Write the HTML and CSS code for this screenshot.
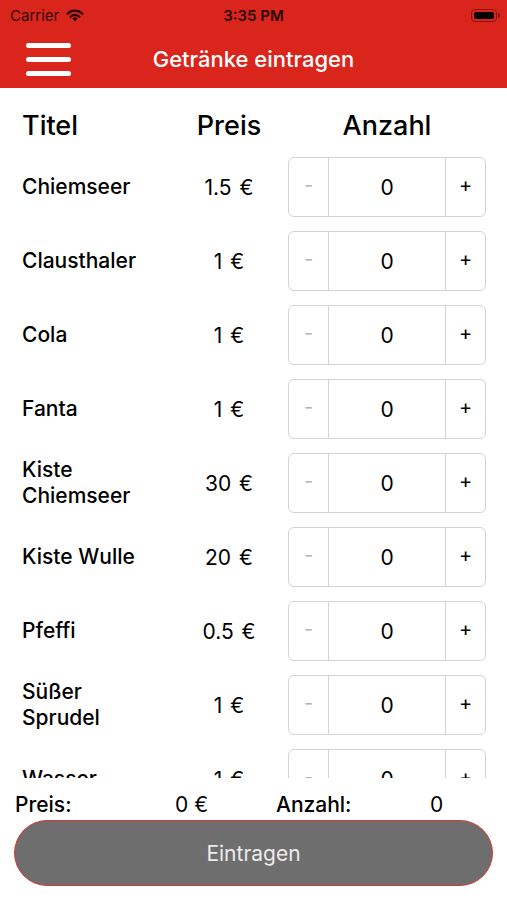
FILE: index.html
```html
<!DOCTYPE html>
<html lang="de">
  <head>
    <meta charset="UTF-8" />
    <meta name="viewport" content="width=device-width, initial-scale=1.0" />
    <title>Getränke eintragen</title>
    <link rel="stylesheet" href="styles.css">
  </head>
  <body>
    <div id="wrap">
      <div class="status-bar">
        <div class="status-left">
          <span>Carrier</span>
          <svg class="wifi" width="20" height="14" viewBox="0 0 20 14">
            <path d="M10 13.2 L7.4 10.6 A3.7 3.7 0 0 1 12.6 10.6 Z" fill="#2a0806" />
            <path d="M5.6 8.8 A6.2 6.2 0 0 1 14.4 8.8" fill="none" stroke="#2a0806" stroke-width="2.2" stroke-linecap="round" />
            <path d="M2.6 5.8 A10.4 10.4 0 0 1 17.4 5.8" fill="none" stroke="#2a0806" stroke-width="2.2" stroke-linecap="round" />
          </svg>
        </div>
        <div class="status-time">3:35 PM</div>
        <div class="status-right">
          <div class="battery"><span></span></div>
        </div>
      </div>
      <div class="nav-bar">
        <button class="menu-btn" aria-label="Menü">
          <i></i><i></i><i></i>
        </button>
        <h1 class="nav-title">Getränke eintragen</h1>
      </div>

      <div class="drink-list">
        <div class="row head">
          <div>Titel</div>
          <div class="price">Preis</div>
          <div class="count-head">Anzahl</div>
        </div>
        <div class="row">
          <div class="name">Chiemseer</div>
          <div class="price">1.5 €</div>
          <div class="stepper"><button class="minus">-</button><span>0</span><button class="plus">+</button></div>
        </div>
        <div class="row">
          <div class="name">Clausthaler</div>
          <div class="price">1 €</div>
          <div class="stepper"><button class="minus">-</button><span>0</span><button class="plus">+</button></div>
        </div>
        <div class="row">
          <div class="name">Cola</div>
          <div class="price">1 €</div>
          <div class="stepper"><button class="minus">-</button><span>0</span><button class="plus">+</button></div>
        </div>
        <div class="row">
          <div class="name">Fanta</div>
          <div class="price">1 €</div>
          <div class="stepper"><button class="minus">-</button><span>0</span><button class="plus">+</button></div>
        </div>
        <div class="row">
          <div class="name">Kiste Chiemseer</div>
          <div class="price">30 €</div>
          <div class="stepper"><button class="minus">-</button><span>0</span><button class="plus">+</button></div>
        </div>
        <div class="row">
          <div class="name">Kiste Wulle</div>
          <div class="price">20 €</div>
          <div class="stepper"><button class="minus">-</button><span>0</span><button class="plus">+</button></div>
        </div>
        <div class="row">
          <div class="name">Pfeffi</div>
          <div class="price">0.5 €</div>
          <div class="stepper"><button class="minus">-</button><span>0</span><button class="plus">+</button></div>
        </div>
        <div class="row">
          <div class="name">Süßer Sprudel</div>
          <div class="price">1 €</div>
          <div class="stepper"><button class="minus">-</button><span>0</span><button class="plus">+</button></div>
        </div>
        <div class="row">
          <div class="name">Wasser</div>
          <div class="price">1 €</div>
          <div class="stepper"><button class="minus">-</button><span>0</span><button class="plus">+</button></div>
        </div>
      </div>

      <div class="totals">
        <div class="label">Preis:</div>
        <div class="value sum">0 €</div>
        <div class="label">Anzahl:</div>
        <div class="value cnt">0</div>
      </div>
      <button class="submit-btn">Eintragen</button>
    </div>
  </body>
</html>
```

FILE: styles.css
```css
* {
  margin: 0;
  padding: 0;
  list-style: none;
  box-sizing: border-box;
  text-decoration: none;
}
body {
  font-family: Inter, "Liberation Sans", sans-serif;
  color: #000;
  background: #fff;
}
#wrap {
  width: 507px;
  height: 900px;
  overflow: hidden;
}

/* status bar */
.status-bar {
  display: flex;
  align-items: center;
  height: 30px;
  padding: 0 10px;
  background: #da251d;
  color: #2a0806;
  font-size: 15px;
}
.status-left {
  display: flex;
  align-items: center;
  gap: 6px;
  width: 120px;
}
.status-time {
  flex: 1;
  text-align: center;
  font-weight: 600;
}
.status-right {
  display: flex;
  justify-content: flex-end;
  width: 120px;
}
.battery {
  position: relative;
  width: 26px;
  height: 13px;
  padding: 2px;
  border: 1px solid rgba(42, 8, 6, 0.5);
  border-radius: 4px;
}
.battery span {
  display: block;
  height: 100%;
  background: #000;
  border-radius: 2px;
}
.battery::after {
  content: "";
  position: absolute;
  right: -4px;
  top: 3px;
  width: 2px;
  height: 5px;
  background: rgba(42, 8, 6, 0.5);
  border-radius: 0 2px 2px 0;
}

/* nav bar */
.nav-bar {
  display: flex;
  align-items: center;
  height: 58px;
  padding: 0 26px;
  background: #da251d;
}
.menu-btn {
  display: flex;
  flex-direction: column;
  gap: 9px;
  width: 45px;
  background: transparent;
  border: 0 none;
}
.menu-btn i {
  display: block;
  height: 5px;
  background: #fff;
  border-radius: 3px;
}
.nav-title {
  flex: 1;
  padding-right: 45px;
  text-align: center;
  color: #fff;
  font-size: 22px;
  font-weight: 500;
}

/* list */
.drink-list {
  height: 690px;
  overflow: hidden;
}
.row {
  display: grid;
  grid-template-columns: 130px 1fr 198px;
  align-items: center;
  height: 74px;
  padding: 0 21px 0 22px;
}
.row.head {
  height: 62px;
  padding-top: 21px;
  align-items: start;
  font-size: 27px;
  font-weight: 500;
}
.name {
  font-size: 21px;
  font-weight: 500;
  line-height: 1.25;
}
.price {
  padding-left: 18px;
  text-align: center;
  font-size: 21px;
  word-spacing: 2px;
}
.row.head .price {
  font-size: 27px;
  word-spacing: 0;
}
.count-head {
  text-align: center;
}
.stepper {
  display: flex;
  height: 60px;
  border: 1px solid #d3d3d3;
  border-radius: 6px;
}
.stepper button {
  width: 40px;
  padding-bottom: 4px;
  background: transparent;
  border: 0 none;
  font-family: inherit;
  font-size: 20px;
  color: #000;
}
.stepper .minus {
  color: #b5b5b5;
  border-right: 1px solid #d3d3d3;
}
.stepper .plus {
  border-left: 1px solid #d3d3d3;
}
.stepper span {
  flex: 1;
  display: flex;
  align-items: center;
  justify-content: center;
  font-size: 21px;
}

/* footer */
.totals {
  display: grid;
  grid-template-columns: 160px 101px 154px 1fr;
  align-items: center;
  height: 42px;
  padding: 10px 15px 0;
  font-size: 21px;
}
.totals .label {
  font-weight: 500;
}
.submit-btn {
  display: block;
  width: 479px;
  height: 66px;
  margin: 0 14px;
  background: #6e6e6e;
  border: 1.5px solid #d73a30;
  border-radius: 33px;
  color: #ececec;
  font-family: inherit;
  font-size: 21px;
}
```
